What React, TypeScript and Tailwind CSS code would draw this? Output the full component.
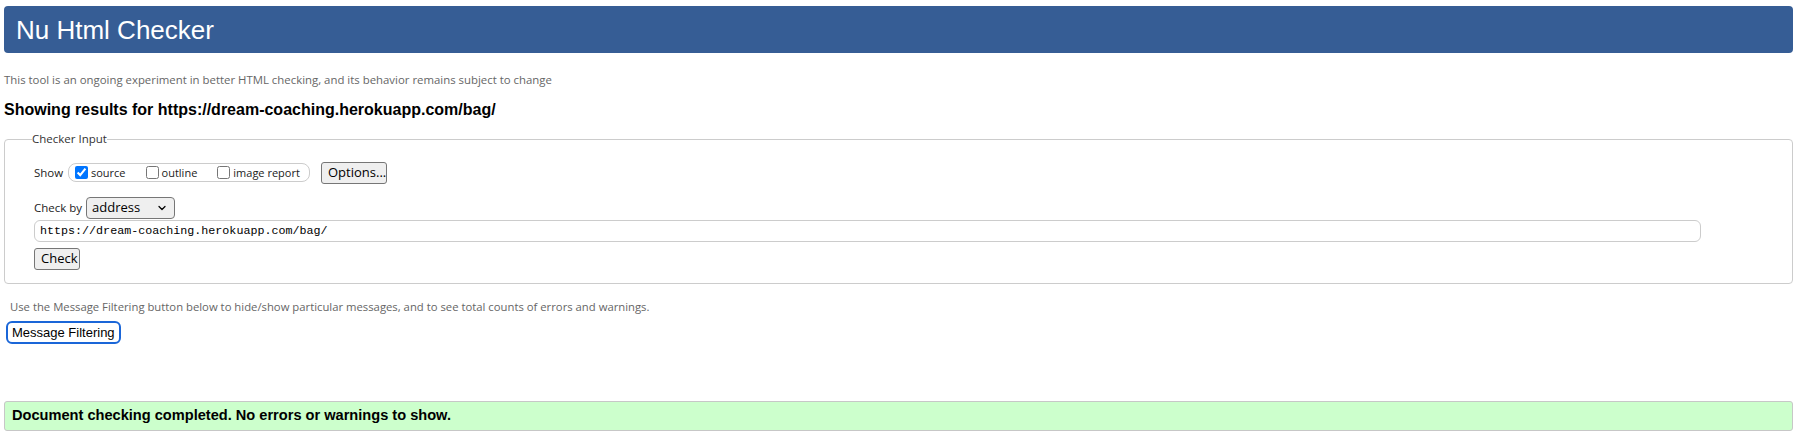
import { ChevronDown } from "lucide-react";

const ui = "font-['Open_Sans',sans-serif]";
const arial = "font-['Liberation_Sans',Arial,sans-serif]";

function Box({ label, checked = false }: { label: string; checked?: boolean }) {
  return (
    <label className="flex items-center gap-[3px]">
      <input
        type="checkbox"
        defaultChecked={checked}
        className="m-0 h-[13px] w-[13px] accent-[#0075ff]"
      />
      <span>{label}</span>
    </label>
  );
}

function GrayButton({ children, className = "" }: { children: React.ReactNode; className?: string }) {
  return (
    <button
      type="button"
      className={`h-[22px] rounded-[3px] border border-[#767676] bg-[#efefef] px-[6px] text-[13px] leading-none text-black ${className}`}
    >
      {children}
    </button>
  );
}

export default function App() {
  return (
    <div className={`ml-1 mr-[10px] bg-white pt-[6px] ${ui}`}>
      <header className="flex h-[47px] items-center rounded-[4px] bg-[#365d95] pl-3">
        <h1 className={`${arial} text-[26px] font-normal leading-none text-white`}>Nu Html Checker</h1>
      </header>

      <p className="mt-[21px] text-[11.4px] leading-none text-[#666]">
        This tool is an ongoing experiment in better HTML checking, and its behavior remains subject to change
      </p>

      <h2 className={`${arial} mt-[17px] text-[16px] font-bold leading-none text-black`}>
        Showing results for https://dream-coaching.herokuapp.com/bag/
      </h2>

      <fieldset className="mt-[15px] rounded-[4px] border border-[#ccc] pb-[13px] pl-[29px] pr-[91px] text-[11.5px] text-[#222]">
        <legend className="-ml-[2px] px-0 text-[11.5px] leading-none text-[#333]">Checker Input</legend>

        <div className="mt-[17px] flex items-center">
          <span className="w-[34px] shrink-0">Show</span>
          <div className="flex h-[19px] w-[242px] items-center gap-[20px] rounded-[8px] border border-[#ccc] pl-[6px] text-[11px]">
            <Box label="source" checked />
            <Box label="outline" />
            <Box label="image report" />
          </div>
          <GrayButton className="ml-[11px] w-[66px]">Options...</GrayButton>
        </div>

        <div className="mt-[13px] flex items-center">
          <span className="w-[52px] shrink-0">Check by</span>
          <div className="flex h-[22px] w-[89px] items-center justify-between rounded-[4px] border border-[#767676] bg-[#efefef] pl-[5px] pr-[6px] text-[13px] text-black">
            <span>address</span>
            <ChevronDown className="h-[12px] w-[12px]" strokeWidth={2.5} />
          </div>
        </div>

        <input
          type="text"
          defaultValue="https://dream-coaching.herokuapp.com/bag/"
          className="mt-[1px] block h-[22px] w-full rounded-[6px] border border-[#ccc] px-[5px] font-['Liberation_Mono',monospace] text-[11.7px] text-black outline-none"
        />

        <GrayButton className="mt-[6px] w-[46px] px-0">Check</GrayButton>
      </fieldset>

      <p className="mt-[17px] pl-[6px] text-[11.3px] leading-none text-[#666]">
        Use the Message Filtering button below to hide/show particular messages, and to see total counts of errors and warnings.
      </p>

      <button
        type="button"
        className={`${arial} mt-[9px] ml-[2px] h-[23px] rounded-[6px] border-2 border-[#1a66d8] bg-white px-[4px] text-[13px] leading-none text-black`}
      >
        Message Filtering
      </button>

      <div
        className={`${arial} mt-[57px] flex h-[30px] items-center rounded-[3px] border border-[#c7c7c7] bg-[#ccffcc] pl-[7px] text-[14.6px] font-bold text-black`}
      >
        Document checking completed. No errors or warnings to show.
      </div>
    </div>
  );
}
